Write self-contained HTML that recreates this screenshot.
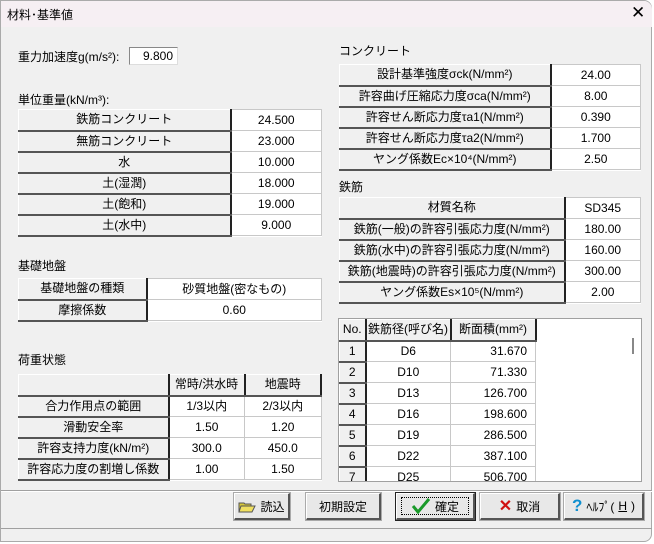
<!DOCTYPE html>
<html><head><meta charset="utf-8"><style>
*{box-sizing:border-box;margin:0;padding:0}
body{width:654px;height:544px;background:#fff;font-family:"Liberation Sans","Noto Sans CJK JP",sans-serif;font-size:12px;color:#000;position:relative;overflow:hidden}
#win{position:absolute;left:0;top:0;width:652px;height:542px;background:#f0f0f0;border:1px solid #aaa;border-radius:0 8px 8px 0}
#title{position:absolute;left:0;top:0;width:651px;height:26px;background:#f6eff3;border-radius:0 8px 0 0}
.a{position:absolute;white-space:nowrap}
table{position:absolute;border-collapse:collapse;background:#fff;border:1px solid #a0a0a0}
td{height:21px;border:1px solid #c8c8c8;text-align:center;padding:0;white-space:nowrap;line-height:19px}
td.h{background:#f0f0f0;border-top:1px solid #fff;border-left:1px solid #fff;border-right:2px solid #222;border-bottom:2px solid #555}
.btn{position:absolute;top:492px;height:27px;background:#e8e8e8;border:1px solid #fff;border-right:2px solid #555;border-bottom:2px solid #555;outline:1px solid #aaa;display:flex;align-items:center;justify-content:center;font-size:12px;gap:4px}
</style></head><body>
<div id="win">
<div id="title"></div>
<div class="a" style="left:6px;top:5px">材料･基準値</div>
<div class="a" style="left:630px;top:2px;font-size:17px">✕</div>

<div class="a" style="left:17px;top:47px">重力加速度g(m/s²):</div>
<div class="a" style="left:128px;top:46px;width:49px;height:18px;background:#fff;border:1px solid #888;border-right-color:#ddd;border-bottom-color:#ddd;text-align:right;padding-right:4px;line-height:16px">9.800</div>

<div class="a" style="left:17px;top:90px">単位重量(kN/m³):</div>
<table style="left:17px;top:108px;width:304px">
<tr><td class="h" style="width:212px">鉄筋コンクリート</td><td>24.500</td></tr>
<tr><td class="h">無筋コンクリート</td><td>23.000</td></tr>
<tr><td class="h">水</td><td>10.000</td></tr>
<tr><td class="h">土(湿潤)</td><td>18.000</td></tr>
<tr><td class="h">土(飽和)</td><td>19.000</td></tr>
<tr><td class="h">土(水中)</td><td>9.000</td></tr>
</table>

<div class="a" style="left:17px;top:256px">基礎地盤</div>
<table style="left:17px;top:277px;width:304px">
<tr><td class="h" style="width:128px">基礎地盤の種類</td><td>砂質地盤(密なもの)</td></tr>
<tr><td class="h">摩擦係数</td><td>0.60</td></tr>
</table>

<div class="a" style="left:17px;top:350px">荷重状態</div>
<table style="left:17px;top:373px;width:304px">
<tr><td class="h" style="width:150px"></td><td class="h" style="width:76px">常時/洪水時</td><td class="h">地震時</td></tr>
<tr><td class="h">合力作用点の範囲</td><td>1/3以内</td><td>2/3以内</td></tr>
<tr><td class="h">滑動安全率</td><td>1.50</td><td>1.20</td></tr>
<tr><td class="h">許容支持力度(kN/m²)</td><td>300.0</td><td>450.0</td></tr>
<tr><td class="h">許容応力度の割増し係数</td><td>1.00</td><td>1.50</td></tr>
</table>

<div class="a" style="left:338px;top:41px">コンクリート</div>
<table style="left:338px;top:63px;width:302px">
<tr><td class="h" style="width:211px">設計基準強度σck(N/mm²)</td><td>24.00</td></tr>
<tr><td class="h">許容曲げ圧縮応力度σca(N/mm²)</td><td>8.00</td></tr>
<tr><td class="h">許容せん断応力度τa1(N/mm²)</td><td>0.390</td></tr>
<tr><td class="h">許容せん断応力度τa2(N/mm²)</td><td>1.700</td></tr>
<tr><td class="h">ヤング係数Ec×10⁴(N/mm²)</td><td>2.50</td></tr>
</table>

<div class="a" style="left:338px;top:177px">鉄筋</div>
<table style="left:338px;top:196px;width:302px">
<tr><td class="h" style="width:225px">材質名称</td><td>SD345</td></tr>
<tr><td class="h">鉄筋(一般)の許容引張応力度(N/mm²)</td><td>180.00</td></tr>
<tr><td class="h">鉄筋(水中)の許容引張応力度(N/mm²)</td><td>160.00</td></tr>
<tr><td class="h">鉄筋(地震時)の許容引張応力度(N/mm²)</td><td>300.00</td></tr>
<tr><td class="h">ヤング係数Es×10⁵(N/mm²)</td><td>2.00</td></tr>
</table>

<div class="a" style="left:337px;top:317px;width:304px;height:164px;background:#fff;border:1px solid #a0a0a0;overflow:hidden">
<table style="left:0;top:0;border:none">
<tr><td class="h" style="width:26px">No.</td><td class="h" style="width:85px">鉄筋径(呼び名)</td><td class="h" style="width:85px">断面積(mm²)</td></tr>
<tr><td class="h">1</td><td>D6</td><td style="text-align:right;padding-right:8px">31.670</td></tr>
<tr><td class="h">2</td><td>D10</td><td style="text-align:right;padding-right:8px">71.330</td></tr>
<tr><td class="h">3</td><td>D13</td><td style="text-align:right;padding-right:8px">126.700</td></tr>
<tr><td class="h">4</td><td>D16</td><td style="text-align:right;padding-right:8px">198.600</td></tr>
<tr><td class="h">5</td><td>D19</td><td style="text-align:right;padding-right:8px">286.500</td></tr>
<tr><td class="h">6</td><td>D22</td><td style="text-align:right;padding-right:8px">387.100</td></tr>
<tr><td class="h">7</td><td>D25</td><td style="text-align:right;padding-right:8px">506.700</td></tr>
</table>
<div class="a" style="left:293px;top:19px;width:2px;height:16px;background:#888"></div>
</div>

<div class="a" style="left:0;top:489px;width:651px;height:1px;background:#a0a0a0"></div>
<div class="a" style="left:0;top:490px;width:651px;height:1px;background:#fff"></div>
<div class="a" style="left:0;top:527px;width:651px;height:1px;background:#a0a0a0"></div>

<div class="btn" style="left:233px;width:56px"><svg width="18" height="16" viewBox="0 0 18 16"><path d="M1 5h5l1 1h6v8H1z" fill="#d8c838" stroke="#555"/><path d="M3 8h14l-3 6H1z" fill="#f0e060" stroke="#555"/></svg>読込</div>
<div class="btn" style="left:305px;width:75px">初期設定</div>
<div class="btn" style="left:395px;width:79px;outline:1px solid #222"><div style="position:absolute;left:4px;top:3px;right:4px;bottom:3px;border:1px dotted #000"></div><svg width="20" height="16" viewBox="0 0 20 16"><path d="M2 8l5 6L18 1" fill="none" stroke="#1a9a2a" stroke-width="3"/></svg> 確定</div>
<div class="btn" style="left:479px;width:80px"><span style="color:#d01010;font-weight:bold;font-size:16px">✕</span>取消</div>
<div class="btn" style="left:563px;width:80px"><span style="color:#1090d0;font-weight:bold;font-size:17px">?</span>ﾍﾙﾌﾟ(<u>H</u>)</div>
</div>
</body></html>
